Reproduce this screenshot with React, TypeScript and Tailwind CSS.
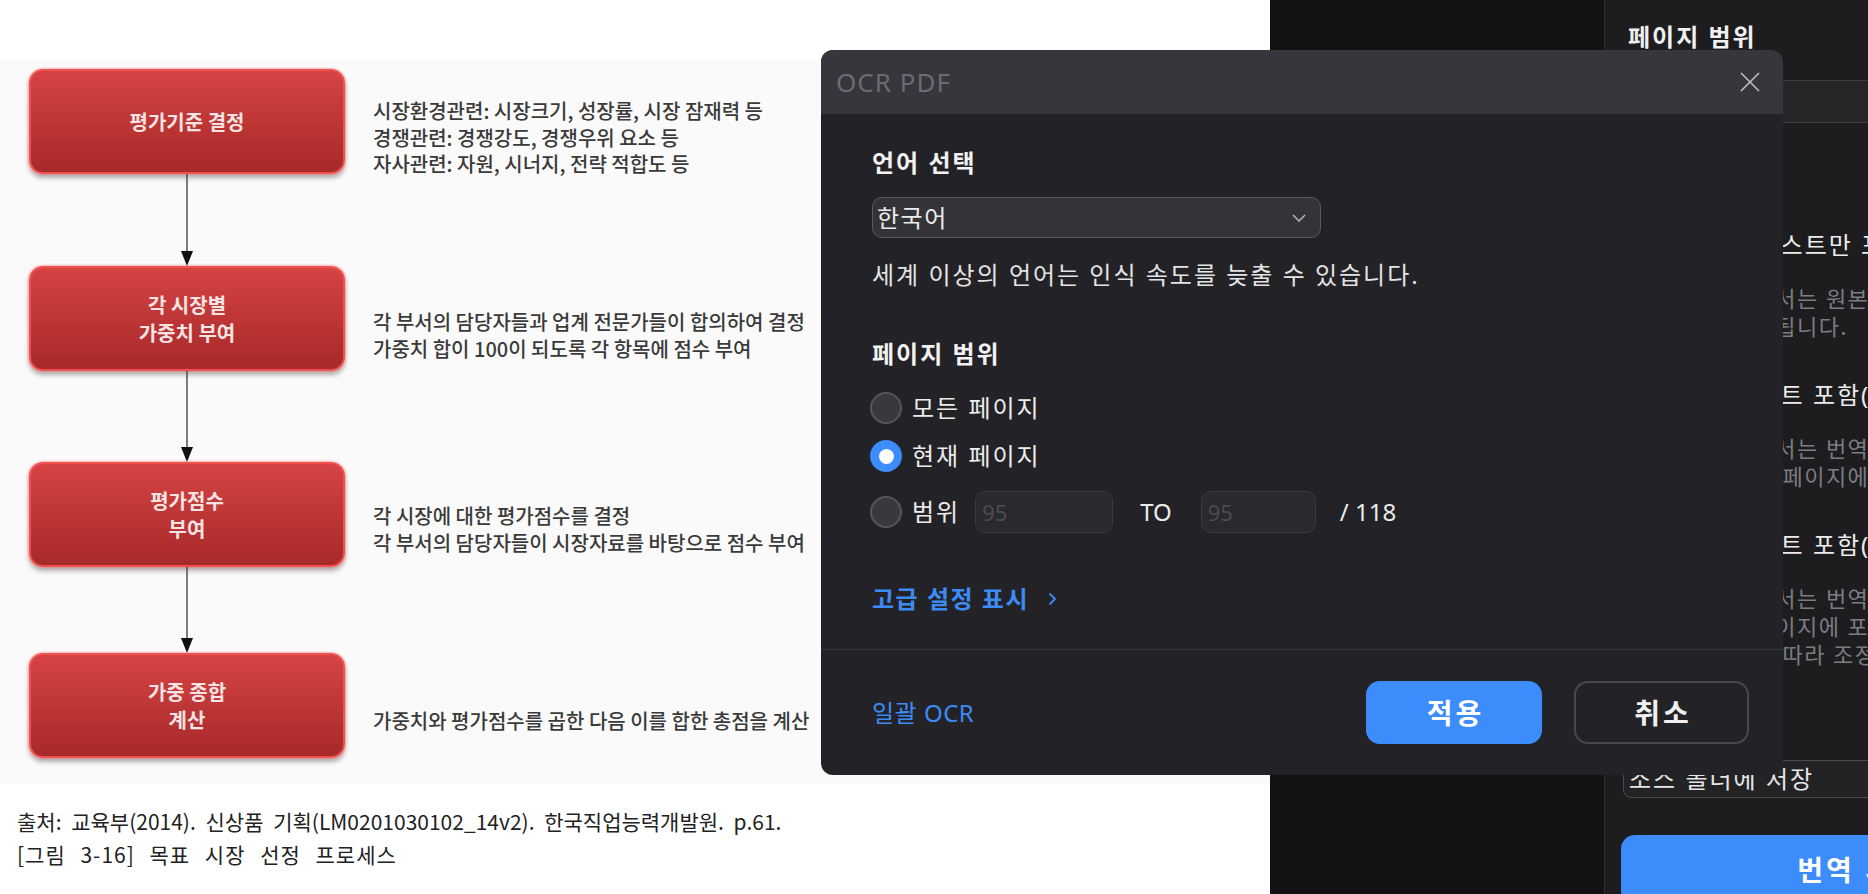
import type { ReactNode } from 'react'

const ui = "font-['Noto_Sans','Noto_Sans_CJK_KR',sans-serif]"
const doc = "font-['Noto_Sans_CJK_KR',sans-serif]"

const steps = [
  {
    title: ['평가기준 결정'],
    lines: [
      '시장환경관련: 시장크기, 성장률, 시장 잠재력 등',
      '경쟁관련: 경쟁강도, 경쟁우위 요소 등',
      '자사관련: 자원, 시너지, 전략 적합도 등',
    ],
    textTop: 'mt-[29px]',
    arrow: 92,
  },
  {
    title: ['각 시장별', '가중치 부여'],
    lines: ['각 부서의 담당자들과 업계 전문가들이 합의하여 결정', '가중치 합이 100이 되도록 각 항목에 점수 부여'],
    textTop: 'mt-[43px]',
    arrow: 91,
  },
  {
    title: ['평가점수', '부여'],
    lines: ['각 시장에 대한 평가점수를 결정', '각 부서의 담당자들이 시장자료를 바탕으로 점수 부여'],
    textTop: 'mt-[41px]',
    arrow: 86,
  },
  {
    title: ['가중 종합', '계산'],
    lines: ['가중치와 평가점수를 곱한 다음 이를 합한 총점을 계산'],
    textTop: 'mt-[55px]',
    arrow: 0,
  },
]

function Arrow({ h }: { h: number }) {
  return (
    <div className="flex w-[316px] justify-center">
      <svg width="16" height={h} viewBox={`0 0 16 ${h}`}>
        <line x1="8" y1="0" x2="8" y2={h - 12} stroke="#3a3a3a" strokeWidth="1.3" />
        <polygon points={`2,${h - 15} 14,${h - 15} 8,${h}`} fill="#111" />
      </svg>
    </div>
  )
}

function Flowchart() {
  return (
    <div className="flex flex-col bg-[#fafafa] pb-[25px] pl-[29px] pt-[9px]">
      {steps.map((s) => (
        <div key={s.title.join()}>
          <div className="flex h-[105px] items-start">
            <div className="flex h-[105px] w-[316px] shrink-0 flex-col items-center justify-center rounded-[14px] border-2 border-[#ef5050] bg-linear-to-b from-[#d64343] to-[#a72929] shadow-[0_0_3px_#ff7070,0_4px_5px_rgba(0,0,0,0.3)]">
              {s.title.map((t) => (
                <span key={t} className="text-[20px] font-bold leading-[28px] text-[#f6e4e4]">
                  {t}
                </span>
              ))}
            </div>
            <div className={`ml-[28px] ${s.textTop} text-[20px] font-medium leading-[26.5px] text-[#3a3a3a]`}>
              {s.lines.map((l) => (
                <p key={l} className="whitespace-nowrap">
                  {l}
                </p>
              ))}
            </div>
          </div>
          {s.arrow > 0 && <Arrow h={s.arrow} />}
        </div>
      ))}
    </div>
  )
}

function Radio({ checked }: { checked?: boolean }) {
  return checked ? (
    <span className="flex h-[32px] w-[32px] shrink-0 items-center justify-center rounded-full bg-[#3c8cfc]">
      <span className="h-[15px] w-[15px] rounded-full bg-white" />
    </span>
  ) : (
    <span className="h-[32px] w-[32px] shrink-0 rounded-full border-2 border-[#55555a] bg-[#39383d]" />
  )
}

function NumberBox({ w }: { w: string }) {
  return (
    <div className={`flex h-[42px] ${w} items-center rounded-[10px] border-[1.5px] border-[#3a3a3f] bg-[#2a2a2e] pl-[6px] text-[22px] text-[#4b4b50]`}>
      95
    </div>
  )
}

function Option({ label, desc, top }: { label: string; desc: string[]; top: string }) {
  return (
    <div className={top}>
      <div className="flex h-[32px] items-center">
        <span className="h-[28px] w-[28px] shrink-0 rounded-full border-2 border-[#55555a] bg-[#2c2c30]" />
        <span className="ml-[25px] whitespace-nowrap text-[24px] tracking-[2px] text-[#ececec]">{label}</span>
      </div>
      <div className="ml-[58px] mt-[23px] text-[22px] leading-[28px] tracking-[1.5px] text-[#7c7c82]">
        {desc.map((d) => (
          <p key={d} className="whitespace-nowrap">
            {d}
          </p>
        ))}
      </div>
    </div>
  )
}

function SidePanel() {
  return (
    <aside className={`flex-1 overflow-hidden border-l border-[#2e2e33] bg-[#1d1d20] ${ui}`}>
      <div className="w-[500px] pl-[18px] pt-[21px]">
        <h3 className="ml-[5px] text-[24px] font-bold leading-[32px] tracking-[2px] text-[#f0f0f0]">페이지 범위</h3>
        <div className="mt-[27px] h-[43px] rounded-[8px] border border-[#3c3c41] bg-[#262629]" />
        <Option
          top="mt-[106px]"
          label="번역된 텍스트만 포함"
          desc={['이 옵션에서는 원본 텍스트가', '모두 대체됩니다.']}
        />
        <Option
          top="mt-[39px]"
          label="원본 텍스트 포함(아래)"
          desc={['이 옵션에서는 번역 텍스트가', '원문과 한 페이지에 표시됩니다.']}
        />
        <Option
          top="mt-[39px]"
          label="원본 텍스트 포함(옆)"
          desc={['이 옵션에서는 번역 텍스트가', '번역된 페이지에 포함되며 크기는', '글자 수에 따라 조정됩니다.']}
        />
        <div className="mt-[92px] flex h-[38px] items-center rounded-[8px] border-[1.5px] border-[#4a4a50] bg-[#232326] pl-[5px] text-[24px] tracking-[2px] text-[#e6e6e6]">
          소스 폴더에 저장
        </div>
        <button className="-ml-[2px] mt-[37px] flex h-[70px] w-[478px] items-center justify-center rounded-[14px] bg-[#3c8cfc] text-[28px] font-bold tracking-[3px] text-white">
          번역 시작
        </button>
      </div>
    </aside>
  )
}

function Row({ children, className = '' }: { children: ReactNode; className?: string }) {
  return <div className={`flex h-[32px] items-center text-[24px] text-[#ececec] ${className}`}>{children}</div>
}

function Modal() {
  return (
    <div className={`absolute left-[821px] top-[50px] flex h-[725px] w-[962px] flex-col overflow-hidden rounded-[12px] bg-[#232327] ${ui}`}>
      <div className="flex h-[64px] shrink-0 items-center justify-between bg-[#37363c] pl-[15px] pr-[23px]">
        <span className="text-[26px] leading-none tracking-[1px] text-[#6c6b71]">OCR PDF</span>
        <svg width="20" height="20" viewBox="0 0 20 20">
          <path d="M1 1 19 19M19 1 1 19" stroke="#bdbdc2" strokeWidth="1.6" />
        </svg>
      </div>

      <div className="flex-1 pl-[51px] pt-[33px]">
        <h2 className="text-[24px] font-bold leading-[32px] tracking-[2px] text-[#f2f2f2]">언어 선택</h2>
        <div className="mt-[18px] flex h-[41px] w-[449px] items-center justify-between rounded-[10px] border-[1.5px] border-[#5b5a60] bg-[#333338] pl-[4px] pr-[14px]">
          <span className="text-[24px] tracking-[1.5px] text-[#ececec]">한국어</span>
          <svg width="14" height="8" viewBox="0 0 14 8">
            <path d="M1 1 7 7 13 1" fill="none" stroke="#b5b5ba" strokeWidth="1.5" />
          </svg>
        </div>
        <p className="mt-[21px] text-[24px] leading-[32px] tracking-[2px] text-[#e4e4e6]">
          세계 이상의 언어는 인식 속도를 늦출 수 있습니다.
        </p>

        <h2 className="mt-[47px] text-[24px] font-bold leading-[32px] tracking-[2px] text-[#f2f2f2]">페이지 범위</h2>
        <div className="-ml-[2px] mt-[22px] flex flex-col">
          <Row>
            <Radio />
            <span className="ml-[10px] tracking-[2px]">모든 페이지</span>
          </Row>
          <Row className="mt-[16px]">
            <Radio checked />
            <span className="ml-[10px] tracking-[2px]">현재 페이지</span>
          </Row>
          <div className="mt-[19px] flex h-[42px] items-center text-[24px] text-[#ececec]">
            <Radio />
            <span className="ml-[10px] tracking-[2px]">범위</span>
            <div className="ml-[15px]">
              <NumberBox w="w-[138px]" />
            </div>
            <span className="ml-[27px]">TO</span>
            <div className="ml-[29px]">
              <NumberBox w="w-[115px]" />
            </div>
            <span className="ml-[24px]">/ 118</span>
          </div>
        </div>

        <div className="mt-[50px] flex h-[32px] items-center text-[24px] font-bold tracking-[1.5px] text-[#3d8bf5]">
          고급 설정 표시
          <svg className="ml-[19px]" width="9" height="14" viewBox="0 0 9 14">
            <path d="M1.5 1.5 7 7l-5.5 5.5" fill="none" stroke="#3d8bf5" strokeWidth="1.8" />
          </svg>
        </div>
      </div>

      <div className="h-px shrink-0 bg-[#3a393e]" />
      <div className="flex h-[125px] shrink-0 items-center justify-between pl-[51px] pr-[34px]">
        <span className="text-[24px] tracking-[0.5px] text-[#3d8bf5]">일괄 OCR</span>
        <div className="flex gap-[32px]">
          <button className="flex h-[63px] w-[176px] items-center justify-center rounded-[14px] bg-[#3c8cfc] pl-[3px] text-[28px] font-bold tracking-[3px] text-white">
            적용
          </button>
          <button className="flex h-[63px] w-[175px] items-center justify-center rounded-[14px] border-2 border-[#48484d] pl-[3px] text-[28px] font-bold tracking-[3px] text-[#f0f0f0]">
            취소
          </button>
        </div>
      </div>
    </div>
  )
}

export default function App() {
  return (
    <div className="relative flex h-[894px] w-[1868px] overflow-hidden bg-white">
      <main className={`w-[1270px] shrink-0 bg-white pt-[60px] ${doc}`}>
        <Flowchart />
        <div className="pl-[17px] pt-[22px] text-[21px] leading-[33px] text-[#222]">
          <p className="whitespace-nowrap [word-spacing:5px]">
            출처: 교육부(2014). 신상품 기획(LM0201030102_14v2). 한국직업능력개발원. p.61.
          </p>
          <p className="whitespace-nowrap tracking-[1px] [word-spacing:9px]">[그림 3-16] 목표 시장 선정 프로세스</p>
        </div>
      </main>
      <div className="w-[334px] shrink-0 bg-[#121215]" />
      <SidePanel />
      <Modal />
    </div>
  )
}
